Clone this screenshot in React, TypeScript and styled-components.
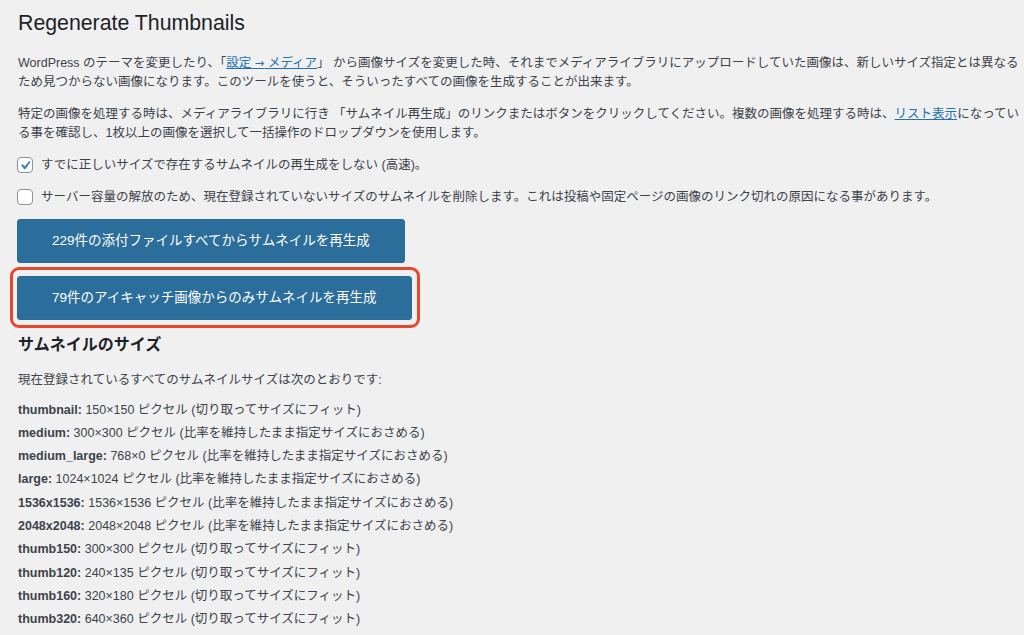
import React from "react";
import styled, { createGlobalStyle } from "styled-components";

const Global = createGlobalStyle`
  html, body {
    margin: 0;
    padding: 0;
    background: #f0f0f1;
  }
  body {
    font-family: "Liberation Sans", "Noto Sans CJK JP", sans-serif;
    color: #3c434a;
    font-size: 12.5px;
    line-height: 19px;
  }
`;

const Page = styled.div`
  width: 1024px;
  height: 635px;
  overflow: hidden;
  box-sizing: border-box;
  padding: 9px 0 0 18px;
  display: flex;
  flex-direction: column;
  align-items: flex-start;
`;

const Title = styled.h1`
  margin: 0;
  font-size: 21.3px;
  line-height: 28px;
  font-weight: 400;
  color: #1d2327;
`;

const Para = styled.p<{ $top: number }>`
  margin: ${(p) => p.$top}px 0 0;
  font-size: 12.5px;
  line-height: 19px;
  white-space: nowrap;
`;

const Link = styled.a`
  color: #2271b1;
  text-decoration: underline;
`;

const Arrow = styled.span`
  font-family: "DejaVu Sans", sans-serif;
  font-size: 11.5px;
`;

const CheckRow = styled.label`
  margin-top: 13px;
  margin-left: -1px;
  display: flex;
  align-items: center;
  gap: 8px;
  height: 19px;
  font-size: 12.5px;
  line-height: 19px;
`;

const Box = styled.span<{ $checked?: boolean }>`
  width: 16px;
  height: 16px;
  box-sizing: border-box;
  border: 1px solid #8c8f94;
  border-radius: 4px;
  background: #fff;
  display: flex;
  align-items: center;
  justify-content: center;
  flex: none;
  svg {
    width: 19px;
    height: 19px;
    margin: -2px;
  }
`;

const ButtonWrap = styled.div<{ $highlight?: boolean }>`
  position: relative;
  margin-left: -1px;
  margin-top: ${(p) => (p.$highlight ? 13 : 12.5)}px;
  ${(p) =>
    p.$highlight &&
    `
    &::after {
      content: "";
      position: absolute;
      top: -9px;
      left: -7px;
      right: -8px;
      bottom: -8px;
      border: 3.5px solid #e9472b;
      border-radius: 9px;
      pointer-events: none;
    }
  `}
`;

const HeroButton = styled.button`
  display: block;
  height: 44px;
  padding: 0 34px;
  box-sizing: border-box;
  background: #2b6d9b;
  border: 1px solid #2a6a97;
  border-radius: 3px;
  color: #fff;
  font-family: "Liberation Sans", "Noto Sans CJK JP", sans-serif;
  font-size: 13.5px;
  line-height: 42px;
  white-space: nowrap;
  cursor: pointer;
`;

const SubTitle = styled.h2`
  margin: 14px 0 0;
  font-size: 16px;
  line-height: 22px;
  font-weight: 700;
  color: #1d2327;
`;

const SizeList = styled.ul`
  list-style: none;
  margin: 11px 0 0;
  padding: 0;
  display: flex;
  flex-direction: column;
  gap: 4.3px;
`;

const SizeItem = styled.li`
  font-size: 12.5px;
  line-height: 19px;
  white-space: nowrap;
  strong {
    font-weight: 700;
    color: #3c434a;
  }
`;

const Check = () => (
  <svg viewBox="0 0 20 20">
    <path
      fill="#3582c4"
      d="M14.83 4.89l1.34.94-5.81 8.38H9.02L5.78 9.67l1.34-1.25 2.57 2.4z"
    />
  </svg>
);

const sizes: [string, string][] = [
  ["thumbnail", "150×150 ピクセル (切り取ってサイズにフィット)"],
  ["medium", "300×300 ピクセル (比率を維持したまま指定サイズにおさめる)"],
  ["medium_large", "768×0 ピクセル (比率を維持したまま指定サイズにおさめる)"],
  ["large", "1024×1024 ピクセル (比率を維持したまま指定サイズにおさめる)"],
  ["1536x1536", "1536×1536 ピクセル (比率を維持したまま指定サイズにおさめる)"],
  ["2048x2048", "2048×2048 ピクセル (比率を維持したまま指定サイズにおさめる)"],
  ["thumb150", "300×300 ピクセル (切り取ってサイズにフィット)"],
  ["thumb120", "240×135 ピクセル (切り取ってサイズにフィット)"],
  ["thumb160", "320×180 ピクセル (切り取ってサイズにフィット)"],
  ["thumb320", "640×360 ピクセル (切り取ってサイズにフィット)"],
];

export default function App() {
  return (
    <>
      <Global />
      <Page>
        <Title>Regenerate Thumbnails</Title>
        <Para $top={16.5}>
          WordPress のテーマを変更したり、「
          <Link href="#">
            設定 <Arrow>→</Arrow> メディア
          </Link>
          」 から画像サイズを変更した時、それまでメディアライブラリにアップロードしていた画像は、新しいサイズ指定とは異なる
          <br />
          ため見つからない画像になります。このツールを使うと、そういったすべての画像を生成することが出来ます。
        </Para>
        <Para $top={13}>
          特定の画像を処理する時は、メディアライブラリに行き
          「サムネイル再生成」のリンクまたはボタンをクリックしてください。複数の画像を処理する時は、
          <Link href="#">リスト表示</Link>になってい
          <br />
          る事を確認し、1枚以上の画像を選択して一括操作のドロップダウンを使用します。
        </Para>
        <CheckRow>
          <Box $checked>
            <Check />
          </Box>
          すでに正しいサイズで存在するサムネイルの再生成をしない (高速)。
        </CheckRow>
        <CheckRow>
          <Box />
          サーバー容量の解放のため、現在登録されていないサイズのサムネイルを削除します。これは投稿や固定ページの画像のリンク切れの原因になる事があります。
        </CheckRow>
        <ButtonWrap>
          <HeroButton>229件の添付ファイルすべてからサムネイルを再生成</HeroButton>
        </ButtonWrap>
        <ButtonWrap $highlight>
          <HeroButton>79件のアイキャッチ画像からのみサムネイルを再生成</HeroButton>
        </ButtonWrap>
        <SubTitle>サムネイルのサイズ</SubTitle>
        <Para $top={14.5}>
          現在登録されているすべてのサムネイルサイズは次のとおりです:
        </Para>
        <SizeList>
          {sizes.map(([name, desc]) => (
            <SizeItem key={name}>
              <strong>{name}:</strong> {desc}
            </SizeItem>
          ))}
        </SizeList>
      </Page>
    </>
  );
}
